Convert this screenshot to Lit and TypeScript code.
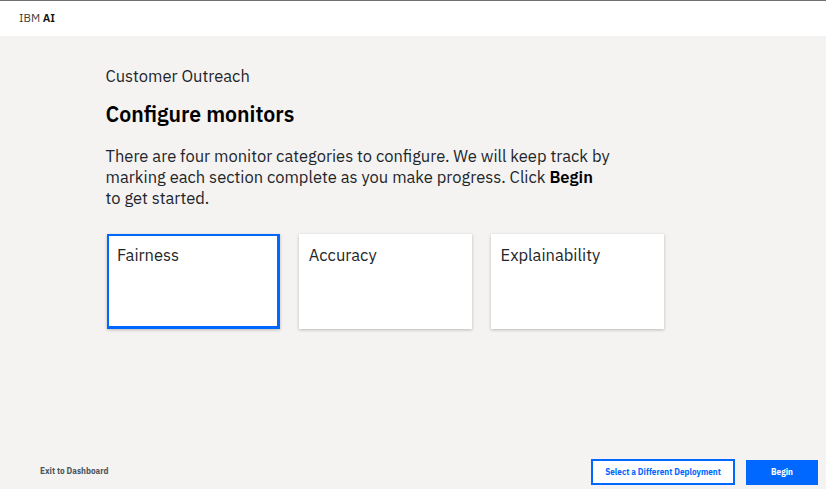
import { LitElement, html, css } from "lit";
import { customElement, property } from "lit/decorators.js";

@customElement("monitor-card")
export class MonitorCard extends LitElement {
  @property() label = "";
  @property({ type: Boolean, reflect: true }) selected = false;

  static styles = css`
    :host {
      display: block;
      box-sizing: border-box;
      width: 173px;
      height: 95px;
      padding: 10px 10px;
      background: #fff;
      box-shadow: 0 1px 3px rgba(0, 0, 0, 0.24);
      font-size: 16.55px;
      line-height: 22px;
      color: #22252a;
    }
    :host([selected]) {
      border: 2px solid #0068ff;
      border-right-width: 3px;
      border-bottom-width: 3px;
      padding: 8px 8px;
    }
  `;

  render() {
    return html`${this.label}`;
  }
}

@customElement("app-root")
export class AppRoot extends LitElement {
  static styles = css`
    :host {
      display: flex;
      flex-direction: column;
      box-sizing: border-box;
      height: 489px;
      overflow: hidden;
      background: #f4f3f2;
      color: #22252a;
      font-family: "IBM Plex Sans", Roboto, "Noto Sans", sans-serif;
    }
    .header {
      box-sizing: border-box;
      height: 36px;
      border-top: 1px solid #6f6f6f;
      padding: 0 19px;
      background: #fff;
      font-size: 11.3px;
      line-height: 33px;
      color: #3c3c3c;
    }
    .header b {
      font-weight: 600;
      color: #111;
    }
    .main {
      flex: 1;
      padding: 30px 0 0 105.5px;
    }
    .project {
      font-size: 16.5px;
      line-height: 21px;
    }
    .title {
      margin: 13px 0 0;
      font-size: 21.3px;
      font-weight: 600;
      line-height: 28px;
      color: #000;
    }
    .intro {
      margin: 18px 0 0;
      font-size: 16.52px;
      line-height: 21px;
      white-space: nowrap;
    }
    .intro b {
      font-weight: 600;
      color: #000;
    }
    .cards {
      display: flex;
      gap: 18.75px;
      margin: 25px 0 0 1.5px;
    }
    .footer {
      display: flex;
      align-items: center;
      height: 26px;
      padding: 0 8px 4px 40px;
      font-size: 8.2px;
      font-weight: 700;
    }
    .exit {
      margin-right: auto;
      padding-bottom: 2px;
      color: #4a565c;
    }
    .button {
      box-sizing: border-box;
      width: 72px;
      height: 25px;
      margin-left: 11px;
      border: 0;
      padding: 0 0 1px;
      background: #0068ff;
      color: #fff;
      font: inherit;
    }
    .button.outline {
      width: 144px;
      height: 26px;
      border: 2px solid #0068ff;
      background: #fff;
      color: #0068ff;
    }
  `;

  render() {
    return html`
      <header class="header">IBM <b>AI</b></header>
      <main class="main">
        <div class="project">Customer Outreach</div>
        <h1 class="title">Configure monitors</h1>
        <p class="intro">
          There are four monitor categories to configure. We will keep track by<br />
          marking each section complete as you make progress. Click <b>Begin</b><br />
          to get started.
        </p>
        <div class="cards">
          <monitor-card label="Fairness" selected></monitor-card>
          <monitor-card label="Accuracy"></monitor-card>
          <monitor-card label="Explainability"></monitor-card>
        </div>
      </main>
      <footer class="footer">
        <span class="exit">Exit to Dashboard</span>
        <button class="button outline">Select a Different Deployment</button>
        <button class="button">Begin</button>
      </footer>
    `;
  }
}
